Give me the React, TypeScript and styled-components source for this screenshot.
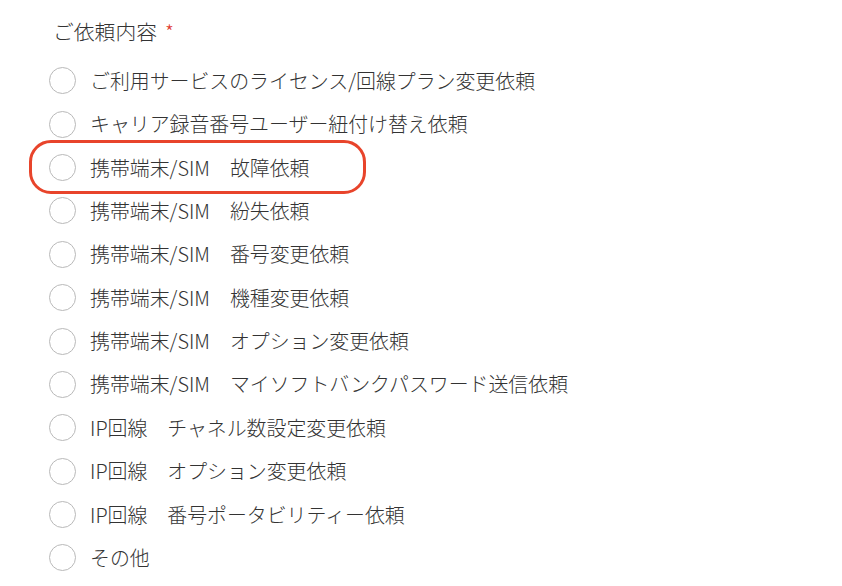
import React from "react";
import styled, { createGlobalStyle } from "styled-components";

const GlobalStyle = createGlobalStyle`
  html, body {
    margin: 0;
    padding: 0;
    background: #ffffff;
  }
  body {
    font-family: "Noto Sans CJK JP", "Noto Sans", sans-serif;
    color: #333333;
  }
`;

const Page = styled.div`
  width: 842px;
  height: 586px;
  overflow: hidden;
  box-sizing: border-box;
  padding: 16px 0 0 49px;
`;

const Label = styled.div`
  display: flex;
  align-items: center;
  gap: 8px;
  padding-left: 4px;
  height: 30px;
  font-size: 20.8px;
  font-weight: 300;
  color: #333333;
`;

const Required = styled.span`
  color: #e03a2f;
  font-size: 20px;
`;

const OptionList = styled.div`
  position: relative;
  display: flex;
  flex-direction: column;
  margin-top: 13px;
`;

const Option = styled.label<{ $highlight?: boolean }>`
  position: relative;
  display: flex;
  align-items: center;
  gap: 14px;
  height: 43.4px;
  font-size: 19.9px;
  font-weight: 300;
  color: #333333;
  cursor: pointer;

  &::before {
    content: "";
    display: ${(p) => (p.$highlight ? "block" : "none")};
    position: absolute;
    left: -20px;
    top: -6px;
    width: 337px;
    height: 54px;
    box-sizing: border-box;
    border: 3.8px solid #e8442b;
    border-radius: 22px;
    pointer-events: none;
  }
`;

const Radio = styled.span`
  flex: none;
  width: 27px;
  height: 27px;
  box-sizing: border-box;
  border: 1px solid #b9b9b9;
  border-radius: 50%;
  background: #fff;
`;

const Text = styled.span`
  white-space: pre;
  line-height: 1;
`;

const options = [
  "ご利用サービスのライセンス/回線プラン変更依頼",
  "キャリア録音番号ユーザー紐付け替え依頼",
  "携帯端末/SIM　故障依頼",
  "携帯端末/SIM　紛失依頼",
  "携帯端末/SIM　番号変更依頼",
  "携帯端末/SIM　機種変更依頼",
  "携帯端末/SIM　オプション変更依頼",
  "携帯端末/SIM　マイソフトバンクパスワード送信依頼",
  "IP回線　チャネル数設定変更依頼",
  "IP回線　オプション変更依頼",
  "IP回線　番号ポータビリティー依頼",
  "その他",
];

export default function App() {
  return (
    <>
      <GlobalStyle />
      <Page>
        <Label>
          ご依頼内容<Required>*</Required>
        </Label>
        <OptionList>
          {options.map((o, i) => (
            <Option key={o} $highlight={i === 2}>
              <Radio />
              <Text>{o}</Text>
            </Option>
          ))}
        </OptionList>
      </Page>
    </>
  );
}
